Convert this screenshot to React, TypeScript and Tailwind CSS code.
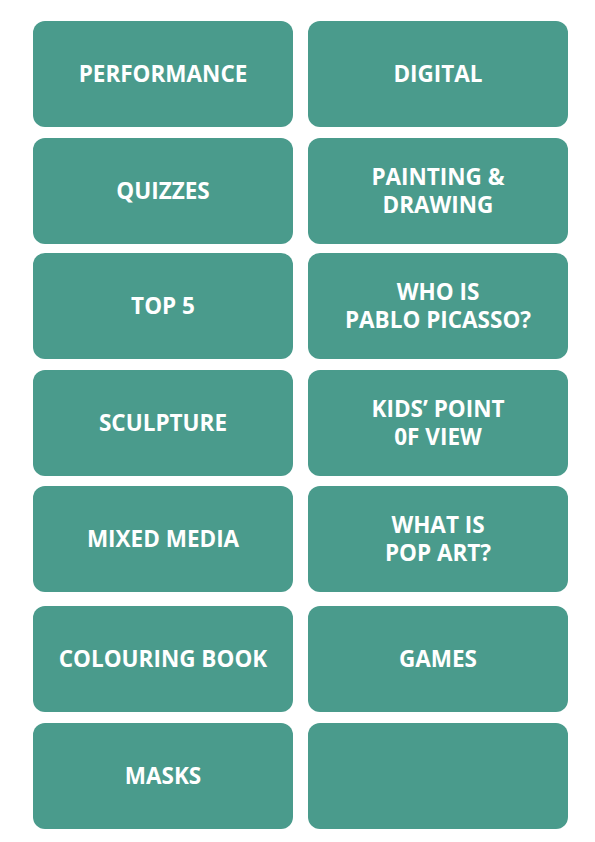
const ROWS: { gap: string; left: string[]; right: string[] }[] = [
	{ gap: "mt-0", left: ["PERFORMANCE"], right: ["DIGITAL"] },
	{ gap: "mt-[11px]", left: ["QUIZZES"], right: ["PAINTING &", "DRAWING"] },
	{ gap: "mt-[9px]", left: ["TOP 5"], right: ["WHO IS", "PABLO PICASSO?"] },
	{ gap: "mt-[11px]", left: ["SCULPTURE"], right: ["KIDS’ POINT", "0F VIEW"] },
	{ gap: "mt-[10px]", left: ["MIXED MEDIA"], right: ["WHAT IS", "POP ART?"] },
	{ gap: "mt-[14px]", left: ["COLOURING BOOK"], right: ["GAMES"] },
	{ gap: "mt-[11px]", left: ["MASKS"], right: [] },
];

function Card({ lines }: { lines: string[] }) {
	return (
		<div className="flex h-[106px] flex-col items-center justify-center rounded-[12px] bg-[#4a9b8c] text-center text-[22.5px] leading-[28px] font-bold text-white">
			{lines.map((line) => (
				<span key={line}>{line}</span>
			))}
		</div>
	);
}

export default function App() {
	return (
		<main
			className="min-h-[842px] w-[595px] bg-white pt-[21px] pr-[27px] pl-[33px]"
			style={{ fontFamily: '"Open Sans", "Noto Sans", sans-serif' }}
		>
			{ROWS.map((row, index) => (
				<div key={index} className={`grid grid-cols-2 gap-x-[15px] ${row.gap}`}>
					<Card lines={row.left} />
					<Card lines={row.right} />
				</div>
			))}
		</main>
	);
}
